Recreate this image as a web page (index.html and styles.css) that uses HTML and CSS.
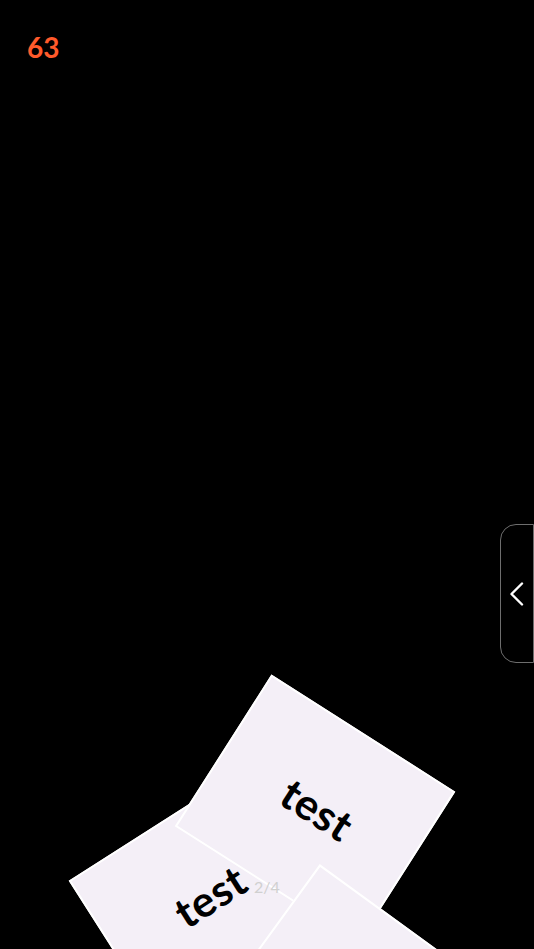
FILE: index.html
```html
<!DOCTYPE html>
<html lang="en">
<head>
<meta charset="utf-8">
<title>Cards</title>
<link rel="stylesheet" href="styles.css">
</head>
<body>
<div class="screen">
  <header class="topbar">
    <span class="score">63</span>
  </header>
  <div class="deck">
    <div class="card card-b"><span class="card-label">test</span></div>
    <div class="card card-a"><span class="card-label">test</span></div>
    <div class="card card-c"></div>
    <div class="pager">2/4</div>
  </div>
  <button class="drawer-tab" type="button" aria-label="Open panel">
    <svg class="chevron" width="14" height="24" viewBox="0 0 14 24" aria-hidden="true">
      <polyline points="12,1.5 1.5,12 12,22.5" fill="none" stroke="#ffffff" stroke-width="2.4" stroke-linecap="round" stroke-linejoin="round"/>
    </svg>
  </button>
</div>
</body>
</html>
```
FILE: styles.css
```css
html, body {
  margin: 0;
  padding: 0;
  background: #000;
}

.screen {
  position: relative;
  width: 534px;
  height: 949px;
  overflow: hidden;
  background: #000;
  font-family: "Lato", "Noto Sans", sans-serif;
}

.topbar {
  padding: 33px 0 0 27px;
}

.score {
  display: inline-block;
  font-size: 28px;
  line-height: 28px;
  font-weight: 700;
  color: #ff5a2b;
}

.deck {
  position: absolute;
  inset: 0;
}

.card {
  position: absolute;
  width: 218px;
  height: 180px;
  box-sizing: border-box;
  border: 2px solid #ffffff;
  background: #f4eff7;
  display: flex;
  align-items: center;
  justify-content: center;
}

.card-label {
  font-size: 43px;
  font-weight: 700;
  color: #000;
  letter-spacing: 0.5px;
  padding: 0 0 4px 4px;
}

.card-b {
  left: 99.5px;
  top: 808px;
  transform: rotate(-32.5deg);
  z-index: 1;
}

.card-a {
  left: 206px;
  top: 719px;
  transform: rotate(32.5deg);
  z-index: 2;
}

.card-c {
  left: 245.6px;
  top: 911px;
  transform: rotate(36deg);
  z-index: 3;
}

.pager {
  position: absolute;
  left: 0;
  right: 0;
  top: 879px;
  text-align: center;
  font-size: 16px;
  line-height: 16px;
  color: #d0d0d0;
  z-index: 4;
}

.drawer-tab {
  position: absolute;
  right: 0;
  top: 524px;
  width: 34px;
  height: 139px;
  box-sizing: border-box;
  margin: 0;
  padding: 0;
  background: #000;
  border: 1px solid #6e6e6e;
  border-radius: 16px 0 0 16px;
  display: flex;
  align-items: center;
  justify-content: center;
  cursor: pointer;
}

.chevron {
  display: block;
}
```
